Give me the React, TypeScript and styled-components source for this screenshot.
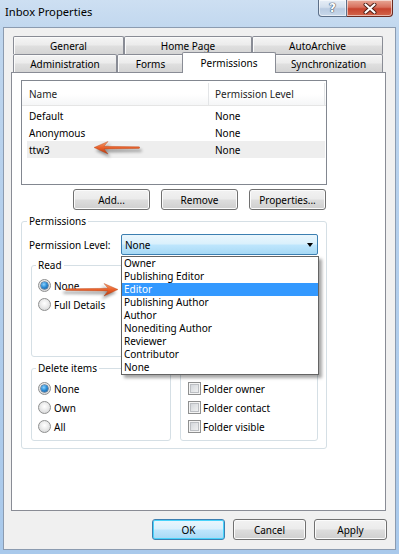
import React from "react";
import styled, { createGlobalStyle, css } from "styled-components";

const FONT = `"Noto Sans", "Open Sans", "DejaVu Sans", sans-serif`;

const GlobalStyle = createGlobalStyle`
  html, body { margin: 0; padding: 0; background: #aecbeb; }
  body { font-family: ${FONT}; font-size: 10px; color: #000; }
  * { box-sizing: border-box; }
`;

const Window = styled.div`
  width: 399px;
  height: 554px;
  display: flex;
  flex-direction: column;
  padding: 0 3px 4px 3px;
  background: linear-gradient(180deg, #cddff2 0%, #bfd6ee 6%, #b4cfec 40%, #a9c9eb 100%);
  overflow: hidden;
`;

const TitleBar = styled.div`
  height: 27px;
  flex: none;
  display: flex;
  justify-content: space-between;
  align-items: flex-start;
`;

const Title = styled.div`
  padding: 4px 0 0 2px;
  font-size: 11.2px;
  line-height: 16px;
  color: #000;
`;

const CaptionButtons = styled.div`
  display: flex;
  margin-right: 3px;
`;

const CaptionButton = styled.div<{ $w: number; $close?: boolean }>`
  width: ${(p) => p.$w}px;
  height: 17px;
  display: flex;
  align-items: center;
  justify-content: center;
  border: 1px solid #5c6f88;
  border-top: none;
  background: linear-gradient(180deg, #e6eef7 0%, #d3dfed 45%, #b9cbe1 55%, #c8d8ea 100%);
  box-shadow: inset 0 0 0 1px rgba(255, 255, 255, 0.55);
  ${(p) =>
    p.$close
      ? css`
          border-left: none;
          border-radius: 0 0 4px 0;
          border-color: #6b2a20;
          background: linear-gradient(180deg, #e8a897 0%, #d8705d 45%, #c7432e 55%, #d2664c 100%);
        `
      : css`
          border-radius: 0 0 0 4px;
        `}
`;

const HelpGlyph = styled.span`
  font-family: "DejaVu Sans", sans-serif;
  font-weight: bold;
  font-size: 12px;
  line-height: 12px;
  color: #fff;
  text-shadow: 0 0 1px #3a4a60, 0 0 1px #3a4a60, 0 0 1px #3a4a60;
`;

const Client = styled.div`
  flex: 1;
  display: flex;
  flex-direction: column;
  background: #f0f0f0;
  border: 1px solid #8b9bb0;
  padding: 8px 9px 9px 7px;
`;

const TabRow = styled.div`
  display: flex;
  height: 18px;
  padding-left: 2px;
`;

const Tab = styled.div<{ $w: number; $active?: boolean }>`
  width: ${(p) => p.$w}px;
  height: 18px;
  flex: none;
  display: flex;
  align-items: center;
  justify-content: center;
  border: 1px solid #898c95;
  border-bottom: none;
  border-radius: 2px 2px 0 0;
  background: linear-gradient(180deg, #f5f5f5 0%, #ececec 45%, #dfdfdf 55%, #d4d4d4 100%);
  box-shadow: inset 1px 1px 0 #fbfbfb;
  line-height: 14px;
  white-space: nowrap;
  ${(p) =>
    p.$active &&
    css`
      height: 21px;
      margin: -2px -2px 0 -2px;
      background: #fff;
      box-shadow: none;
      position: relative;
      z-index: 2;
      padding-bottom: 1px;
    `}
`;

const Panel = styled.div`
  position: relative;
  z-index: 1;
  height: 439px;
  flex: none;
  background: #fff;
  border: 1px solid #898c95;
  padding: 7px 9px;
`;

const ListView = styled.div`
  width: 306px;
  height: 105px;
  border: 1px solid #828790;
  background: #fff;
`;

const ListHeader = styled.div`
  display: flex;
  height: 25px;
  padding-top: 2px;
  border-bottom: 1px solid #e5e5e5;
  background: linear-gradient(180deg, #ffffff 0%, #ffffff 55%, #f5f6f7 100%);
`;

const HeaderCell = styled.div<{ $w: number; $pl: number }>`
  width: ${(p) => p.$w}px;
  padding-left: ${(p) => p.$pl}px;
  display: flex;
  align-items: center;
  border-right: 1px solid #e3e5e7;
  color: #1e1e1e;
`;

const ListBody = styled.div`
  padding-top: 1px;
`;

const ListRow = styled.div<{ $selected?: boolean }>`
  display: flex;
  align-items: center;
  height: 17px;
  margin: 0 1px 0 5px;
  background: ${(p) => (p.$selected ? "#eeeeee" : "transparent")};
`;

const RowCell = styled.div<{ $w?: number; $pl: number }>`
  ${(p) => (p.$w ? `width: ${p.$w}px;` : "flex: 1;")}
  padding-left: ${(p) => p.$pl}px;
`;

const ButtonRow = styled.div<{ $gap: number }>`
  display: flex;
  justify-content: flex-end;
  gap: ${(p) => p.$gap}px;
`;

const ListButtons = styled(ButtonRow)`
  width: 306px;
  margin-top: 4px;
  padding-right: 1px;
`;

const Button = styled.button<{ $w: number; $default?: boolean }>`
  width: ${(p) => p.$w}px;
  height: 21px;
  padding: 0;
  font-family: ${FONT};
  font-size: 10px;
  color: #000;
  border: 1px solid #707070;
  border-radius: 3px;
  background: linear-gradient(180deg, #f2f2f2 0%, #ebebeb 48%, #dddddd 52%, #cfcfcf 100%);
  box-shadow: inset 0 0 0 1px #fbfbfb;
  ${(p) =>
    p.$default &&
    css`
      border-color: #3c7fb1;
      background: linear-gradient(180deg, #eaf6fd 0%, #d9f0fc 48%, #bee6fd 52%, #a7d9f5 100%);
      box-shadow: inset 0 0 0 1px #48d3fb;
    `}
`;

const GroupBox = styled.fieldset<{ $w?: number; $h?: number; $pt: number; $pl: number; $pr?: number; $pb?: number }>`
  margin: 0;
  min-width: 0;
  ${(p) => (p.$w ? `width: ${p.$w}px;` : "")}
  ${(p) => (p.$h ? `height: ${p.$h}px;` : "")}
  border: 1px solid #d5dfe5;
  border-radius: 3px;
  padding: ${(p) => `${p.$pt}px ${p.$pr ?? 0}px ${p.$pb ?? 0}px ${p.$pl}px`};
`;

/* group whose caption lies hidden under the open drop-down list:
   its box starts at the caption's midline */
const CoveredGroup = styled(GroupBox)`
  align-self: end;
`;

const PermGroup = styled(GroupBox)`
  margin-top: 3px;
`;

const Legend = styled.legend`
  padding: 0 2px;
  margin-left: -2px;
  line-height: 16px;
`;

const LevelRow = styled.div`
  display: flex;
  align-items: center;
  height: 21px;
`;

const LevelLabel = styled.span`
  width: 92px;
  flex: none;
`;

const ComboWrap = styled.div`
  position: relative;
  width: 197px;
  height: 21px;
`;

const Combo = styled.div`
  height: 21px;
  display: flex;
  align-items: center;
  justify-content: space-between;
  padding: 0 4px 0 3px;
  border: 1px solid #3c7fb1;
  border-radius: 2px;
  background: linear-gradient(180deg, #eaf6fd 0%, #d9f0fc 48%, #bee6fd 52%, #a7d9f5 100%);
`;

const DropArrow = styled.span`
  width: 0;
  height: 0;
  border-left: 3.5px solid transparent;
  border-right: 3.5px solid transparent;
  border-top: 4px solid #000;
  margin-top: 1px;
`;

const DropList = styled.ul`
  position: absolute;
  top: 22px;
  left: 0;
  width: 198px;
  margin: 0;
  padding: 0;
  list-style: none;
  background: #fff;
  border: 1px solid #646464;
  box-shadow: 3px 3px 3px rgba(0, 0, 0, 0.35);
  z-index: 5;
`;

const DropItem = styled.li<{ $selected?: boolean }>`
  height: 13px;
  line-height: 13px;
  padding-left: 2px;
  white-space: nowrap;
  color: ${(p) => (p.$selected ? "#fff" : "#000")};
  background: ${(p) => (p.$selected ? "#3399ff" : "transparent")};
`;

const GroupsGrid = styled.div`
  display: grid;
  grid-template-columns: 140px 138px;
  column-gap: 9px;
  row-gap: 3px;
  margin: 2px 0 0 2px;
`;

const OptionRow = styled.div`
  display: flex;
  align-items: center;
  height: 19px;
  gap: 3px;
  white-space: nowrap;
`;

const CheckRow = styled(OptionRow)`
  gap: 2px;
`;

const Radio = styled.span<{ $checked?: boolean }>`
  width: 13px;
  height: 13px;
  flex: none;
  border-radius: 50%;
  border: 1px solid #8e8f8f;
  background: radial-gradient(circle at 50% 40%, #ffffff 0%, #f0f0f0 35%, #cfd0d1 100%);
  display: flex;
  align-items: center;
  justify-content: center;
  &::after {
    content: "";
    display: ${(p) => (p.$checked ? "block" : "none")};
    width: 7px;
    height: 7px;
    border-radius: 50%;
    background: radial-gradient(circle at 40% 35%, #8fd4ff 0%, #2f8fd8 45%, #0d4f8f 100%);
    box-shadow: 0 0 0 0.5px #1b3f66;
  }
`;

const Checkbox = styled.span`
  width: 13px;
  height: 13px;
  flex: none;
  border: 1px solid #8e8f8f;
  background: linear-gradient(135deg, #cbcfd5 0%, #e4e6e8 55%, #f6f6f6 100%);
  box-shadow: inset 0 0 0 1px #f4f4f4, inset 0 0 0 2px #bcbfc3;
`;

const Arrow = styled.svg<{ $left: number; $top: number; $flip?: boolean }>`
  position: absolute;
  left: ${(p) => p.$left}px;
  top: ${(p) => p.$top}px;
  z-index: 4;
  overflow: visible;
  filter: drop-shadow(2px 3px 1.5px rgba(0, 0, 0, 0.4));
  ${(p) => p.$flip && "transform: scaleX(-1);"}
`;

function PointerArrow({ len, left, top, flip, id }: { len: number; left: number; top: number; flip?: boolean; id: string }) {
  const w = len + 4;
  const t = len + 1;
  const d = `M1 8.5 L15 2.5 L11 7.3 L${t - 1} 7.8 L${t} 8.6 L${t - 1} 9.4 L11 10 L15 15 Z`;
  return (
    <Arrow $left={left} $top={top} $flip={flip} width={w} height={18} viewBox={`0 0 ${w} 18`}>
      <defs>
        <linearGradient id={id} x1="0" y1="0" x2="0" y2="1">
          <stop offset="0" stopColor="#f7a070" />
          <stop offset="0.5" stopColor="#e8602a" />
          <stop offset="1" stopColor="#b8380f" />
        </linearGradient>
      </defs>
      <path d={d} fill={`url(#${id})`} stroke="#b64316" strokeWidth="0.4" />
    </Arrow>
  );
}

const CloseIcon = () => (
  <svg width="14" height="11" viewBox="0 0 14 11">
    <path d="M2.5 1.5 L11.5 9.5 M11.5 1.5 L2.5 9.5" stroke="#4b1c14" strokeWidth="4" strokeLinecap="round" />
    <path d="M2.5 1.5 L11.5 9.5 M11.5 1.5 L2.5 9.5" stroke="#ffffff" strokeWidth="2.2" strokeLinecap="round" />
  </svg>
);

const DialogButtons = styled(ButtonRow)`
  margin-top: 8px;
  margin-right: -1px;
`;

const levels = [
  "Owner",
  "Publishing Editor",
  "Editor",
  "Publishing Author",
  "Author",
  "Nonediting Author",
  "Reviewer",
  "Contributor",
  "None",
];

const members = [
  { name: "Default", level: "None" },
  { name: "Anonymous", level: "None" },
  { name: "ttw3", level: "None", selected: true },
];

export default function App() {
  return (
    <>
      <GlobalStyle />
      <Window>
        <TitleBar>
          <Title>Inbox Properties</Title>
          <CaptionButtons>
            <CaptionButton $w={29}>
              <HelpGlyph>?</HelpGlyph>
            </CaptionButton>
            <CaptionButton $w={46} $close>
              <CloseIcon />
            </CaptionButton>
          </CaptionButtons>
        </TitleBar>
        <Client>
          <TabRow>
            <Tab $w={111}>General</Tab>
            <Tab $w={128}>Home Page</Tab>
            <Tab $w={131}>AutoArchive</Tab>
          </TabRow>
          <TabRow>
            <Tab $w={104}>Administration</Tab>
            <Tab $w={67}>Forms</Tab>
            <Tab $w={94} $active>
              Permissions
            </Tab>
            <Tab $w={109}>Synchronization</Tab>
          </TabRow>
          <Panel>
            <ListView>
              <ListHeader>
                <HeaderCell $w={187} $pl={7}>
                  Name
                </HeaderCell>
                <HeaderCell $w={116} $pl={6}>
                  Permission Level
                </HeaderCell>
              </ListHeader>
              <ListBody>
                {members.map((m) => (
                  <ListRow key={m.name} $selected={m.selected}>
                    <RowCell $w={182} $pl={2}>
                      {m.name}
                    </RowCell>
                    <RowCell $pl={6}>{m.level}</RowCell>
                  </ListRow>
                ))}
              </ListBody>
            </ListView>
            <ListButtons $gap={11}>
              <Button $w={77}>Add...</Button>
              <Button $w={77}>Remove</Button>
              <Button $w={77}>Properties...</Button>
            </ListButtons>

            <PermGroup $w={306} $pt={5} $pl={7} $pr={8} $pb={7}>
              <Legend>Permissions</Legend>
              <LevelRow>
                <LevelLabel>Permission Level:</LevelLabel>
                <ComboWrap>
                  <Combo>
                    <span>None</span>
                    <DropArrow />
                  </Combo>
                  <DropList>
                    {levels.map((l) => (
                      <DropItem key={l} $selected={l === "Editor"}>
                        {l}
                      </DropItem>
                    ))}
                  </DropList>
                </ComboWrap>
              </LevelRow>
              <GroupsGrid>
                <GroupBox $h={100} $pt={3} $pl={6}>
                  <Legend>Read</Legend>
                  <OptionRow>
                    <Radio $checked />
                    None
                  </OptionRow>
                  <OptionRow>
                    <Radio />
                    Full Details
                  </OptionRow>
                </GroupBox>
                <CoveredGroup $h={92} $pt={10} $pl={7} />
                <GroupBox $h={81} $pt={3} $pl={6}>
                  <Legend>Delete items</Legend>
                  <OptionRow>
                    <Radio $checked />
                    None
                  </OptionRow>
                  <OptionRow>
                    <Radio />
                    Own
                  </OptionRow>
                  <OptionRow>
                    <Radio />
                    All
                  </OptionRow>
                </GroupBox>
                <CoveredGroup $h={73} $pt={10} $pl={7}>
                  <CheckRow>
                    <Checkbox />
                    Folder owner
                  </CheckRow>
                  <CheckRow>
                    <Checkbox />
                    Folder contact
                  </CheckRow>
                  <CheckRow>
                    <Checkbox />
                    Folder visible
                  </CheckRow>
                </CoveredGroup>
              </GroupsGrid>
            </PermGroup>

            <PointerArrow id="arrowA" len={46} left={81} top={66} />
            <PointerArrow id="arrowB" len={53} left={50} top={208} flip />
          </Panel>
          <DialogButtons $gap={8}>
            <Button $w={73} $default>
              OK
            </Button>
            <Button $w={73}>Cancel</Button>
            <Button $w={73}>Apply</Button>
          </DialogButtons>
        </Client>
      </Window>
    </>
  );
}
